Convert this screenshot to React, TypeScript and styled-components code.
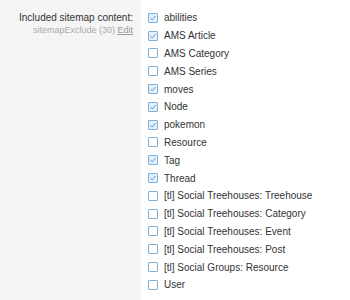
import React from 'react';
import styled, { createGlobalStyle } from 'styled-components';

const items: Array<{ label: string; checked: boolean }> = [
    { label: 'abilities', checked: true },
    { label: 'AMS Article', checked: true },
    { label: 'AMS Category', checked: false },
    { label: 'AMS Series', checked: false },
    { label: 'moves', checked: true },
    { label: 'Node', checked: true },
    { label: 'pokemon', checked: true },
    { label: 'Resource', checked: false },
    { label: 'Tag', checked: true },
    { label: 'Thread', checked: true },
    { label: '[tl] Social Treehouses: Treehouse', checked: false },
    { label: '[tl] Social Treehouses: Category', checked: false },
    { label: '[tl] Social Treehouses: Event', checked: false },
    { label: '[tl] Social Treehouses: Post', checked: false },
    { label: '[tl] Social Groups: Resource', checked: false },
    { label: 'User', checked: false },
];

const App: React.FC = () => {
    return (
        <>
            <GlobalStyle />
            <FormRow>
                <LabelCol>
                    <Label>Included sitemap content:</Label>
                    <Hint>
                        sitemapExclude (30) <EditLink>Edit</EditLink>
                    </Hint>
                </LabelCol>
                <InputCol>
                    <List>
                        {items.map((item) => (
                            <Item key={item.label}>
                                <Box $checked={item.checked}>
                                    {item.checked && (
                                        <svg width="8" height="8" viewBox="0 0 8 8">
                                            <path d="M1.4 4.2 L3.2 5.9 L6.6 2" fill="none" stroke="#5b9bd0" strokeWidth="1" />
                                        </svg>
                                    )}
                                </Box>
                                {item.label}
                            </Item>
                        ))}
                    </List>
                    <Explain>
                        If you wish to exclude a content type from the sitemap, uncheck it here.
                    </Explain>
                </InputCol>
            </FormRow>
        </>
    );
};

const GlobalStyle = createGlobalStyle`
    html, body {
        margin: 0;
        padding: 0;
        background: #ffffff;
        font-family: "Liberation Sans", Arial, sans-serif;
    }
`;

const FormRow = styled.div`
    display: grid;
    grid-template-columns: 141px 1fr;
    height: 300px;
    overflow: hidden;
`;

const LabelCol = styled.div`
    background: #f5f5f5;
    padding: 11px 8px 0 0;
    text-align: right;
`;

const Label = styled.div`
    font-size: 10px;
    line-height: 13px;
    color: #333;
`;

const Hint = styled.div`
    margin-top: 1px;
    font-size: 9px;
    line-height: 11px;
    color: #aaa;
`;

const EditLink = styled.span`
    text-decoration: underline;
    color: #999;
`;

const InputCol = styled.div`
    padding: 9px 4px 0 6px;
`;

const List = styled.ul`
    list-style: none;
    margin: 0;
    padding: 0;
`;

const Item = styled.li`
    display: flex;
    align-items: center;
    height: 17.8px;
    font-size: 10px;
    color: #333;
    white-space: nowrap;
`;

const Box = styled.span<{ $checked: boolean }>`
    display: inline-flex;
    align-items: center;
    justify-content: center;
    box-sizing: border-box;
    width: 10px;
    height: 10px;
    margin: 0 6px 0 1px;
    border: 1px solid #7fb0da;
    border-radius: 1px;
    background: ${(p) => (p.$checked ? '#e6f0fa' : '#ffffff')};
`;

const Explain = styled.div`
    margin-top: 4px;
    font-size: 9px;
    line-height: 12px;
    color: #999;
`;

export default App;
